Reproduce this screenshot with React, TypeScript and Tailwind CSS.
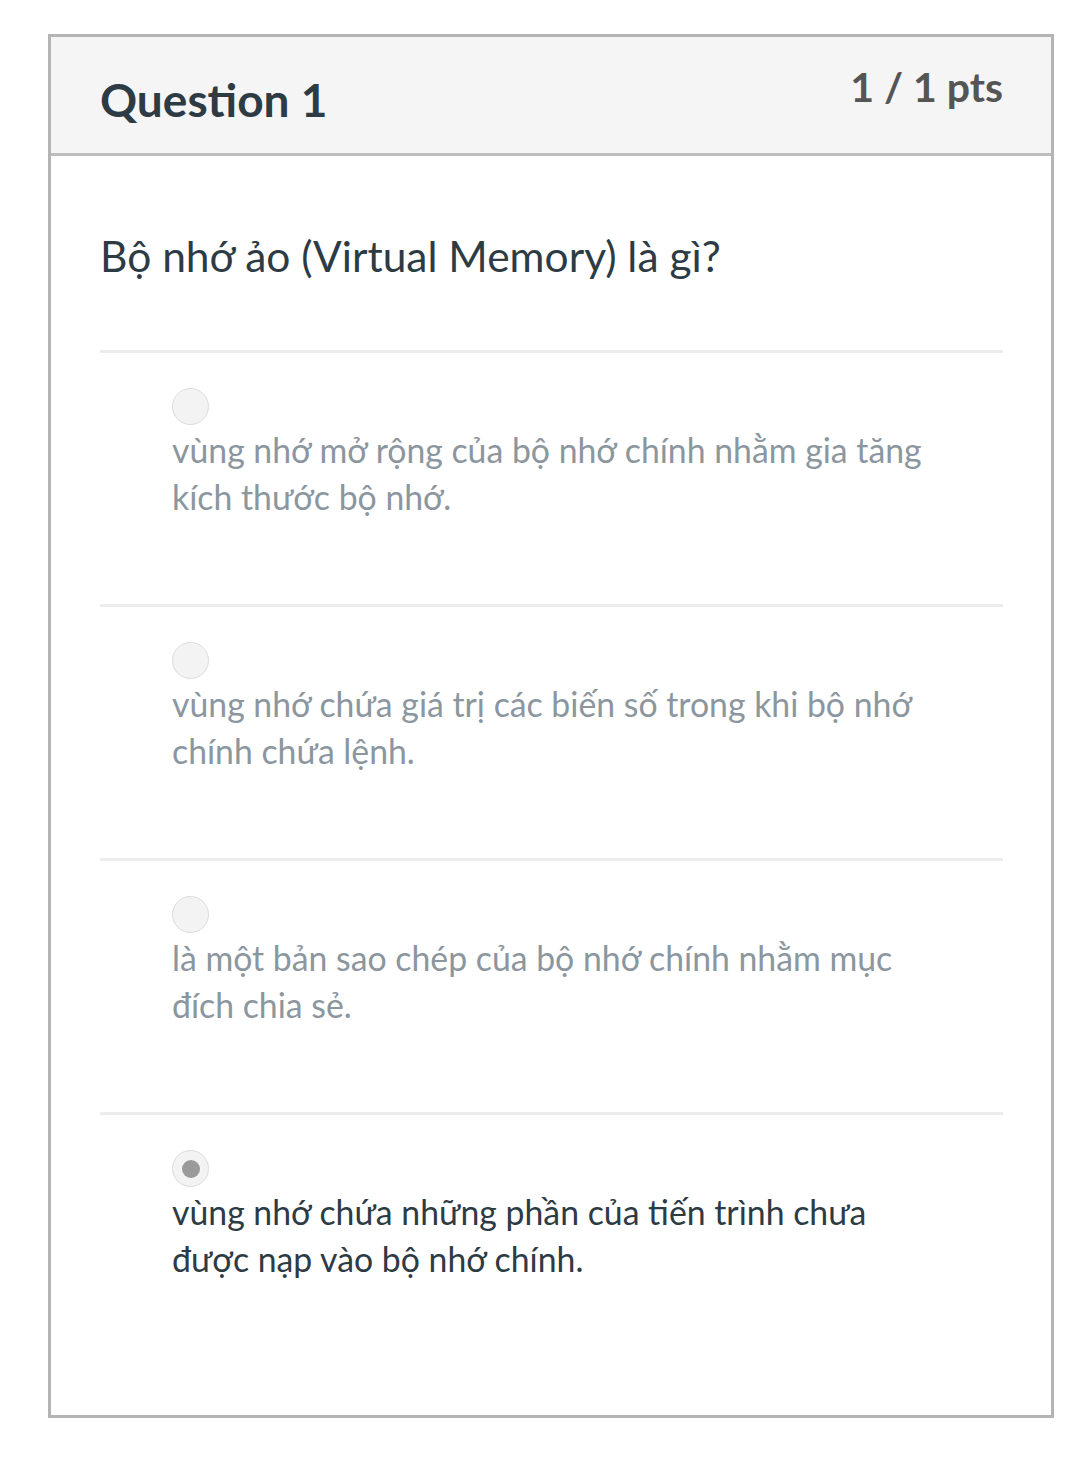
import React from 'react'

const answers = [
  { text: 'vùng nhớ mở rộng của bộ nhớ chính nhằm gia tăng kích thước bộ nhớ.', picked: false },
  { text: 'vùng nhớ chứa giá trị các biến số trong khi bộ nhớ chính chứa lệnh.', picked: false },
  { text: 'là một bản sao chép của bộ nhớ chính nhằm mục đích chia sẻ.', picked: false },
  { text: 'vùng nhớ chứa những phần của tiến trình chưa được nạp vào bộ nhớ chính.', picked: true },
]

function Radio({ picked }: { picked: boolean }) {
  return (
    <div className="w-[37px] h-[37px] rounded-full bg-[#f3f3f3] border border-[#dcdcdc] flex items-center justify-center">
      {picked && <div className="w-[18px] h-[18px] rounded-full bg-[#9a9a9a]" />}
    </div>
  )
}

export default function App() {
  return (
    <div className="min-h-[1463px] bg-white pt-[34px] font-['Lato','Noto_Sans',sans-serif]">
      <div className="ml-[48px] w-[1006px] border-[3px] border-[#b4b4b4]">
        <div className="h-[119px] bg-[#f5f5f5] border-b-[3px] border-[#bdbdbd] flex justify-between pl-[49px] pr-[48px]">
          <h2 className="pt-[35px] text-[46px] leading-[56px] font-bold text-[#2d3b45]">Question 1</h2>
          <div className="pt-[26px] text-[41px] leading-[48px] font-bold text-[#555555]">1 / 1 pts</div>
        </div>
        <div className="pl-[49px] pr-[48px]">
          <p className="pt-[72px] pb-[66px] text-[42.5px] leading-[56px] text-[#2d3b45]">Bộ nhớ ảo (Virtual Memory) là gì?</p>
          {answers.map((a, i) => (
            <div
              key={i}
              className={`border-t-[3px] border-[#ececec] pt-[35px] pl-[72px] ${i === answers.length - 1 ? 'pb-[132px]' : 'pb-[83px]'}`}
            >
              <Radio picked={a.picked} />
              <p className={`mt-[2px] pr-[60px] text-[33.8px] leading-[47px] ${a.picked ? 'text-[#2d3b45]' : 'text-[#8b969e]'}`}>
                {a.text}
              </p>
            </div>
          ))}
        </div>
      </div>
    </div>
  )
}
